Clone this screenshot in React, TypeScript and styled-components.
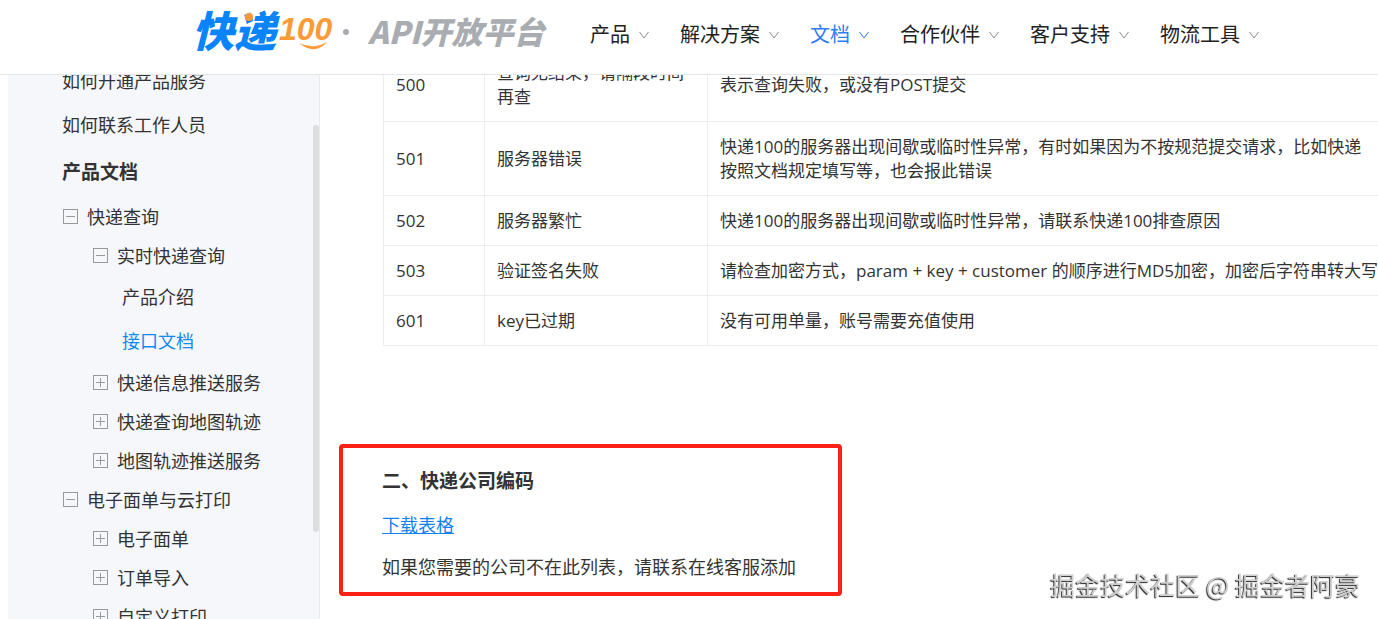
import React from "react";
import styled, { createGlobalStyle } from "styled-components";

const GlobalStyle = createGlobalStyle`
  *, *::before, *::after { box-sizing: border-box; }
  body {
    margin: 0;
    background: #fff;
    color: #333;
    font-family: "Open Sans", "Noto Sans CJK SC", sans-serif;
    font-size: 18px;
    line-height: 24px;
  }
  button { font: inherit; color: inherit; background: none; border: 0; padding: 0; cursor: pointer; }
  a { color: inherit; text-decoration: none; }
`;

const Page = styled.div`
  display: flex;
  flex-direction: column;
  height: 100vh;
  overflow: hidden;
`;

const Header = styled.header`
  display: flex;
  align-items: center;
  flex: none;
  height: 75px;
  padding: 0 20px 4px 185px;
  border-bottom: 1px solid #e4e6e8;
  background: #fff;
`;

const Brand = styled.a`
  display: block;
  flex: none;
  width: 370px;
  height: 66px;
  margin-right: 35px;
  svg { display: block; overflow: visible; }
`;

const TopNav = styled.nav`
  display: flex;
  gap: 31px;
`;

const NavButton = styled.button<{ $active?: boolean }>`
  display: flex;
  align-items: center;
  gap: 9px;
  font-size: 20px;
  line-height: 28px;
  white-space: nowrap;
  color: ${(p) => (p.$active ? "#2f7cf6" : "#222")};
  svg { color: ${(p) => (p.$active ? "#2f7cf6" : "#8a8a8a")}; }
`;

const Body = styled.div`
  display: flex;
  flex: 1;
  min-height: 0;
  padding-left: 8px;
`;

const Sidebar = styled.aside`
  position: relative;
  flex: none;
  width: 312px;
  overflow: hidden;
  background: #f5f7fb;
  border-right: 1px solid #e8eaee;
`;

const Thumb = styled.div`
  position: absolute;
  top: 50px;
  right: 0;
  width: 6px;
  height: 407px;
  border-radius: 3px;
  background: #dddee0;
`;

const Menu = styled.nav`
  display: flex;
  flex-direction: column;
  margin-top: -16px;
  padding-left: 54px;
`;

const MenuTitle = styled.h2`
  margin: 0;
  font-size: 19px;
  line-height: 50px;
  font-weight: 700;
`;

const MenuLink = styled.a<{ $leaf?: boolean; $active?: boolean }>`
  padding-left: ${(p) => (p.$leaf ? 60 : 0)}px;
  line-height: 44px;
  color: ${(p) => (p.$active ? "#1389f2" : "inherit")};
`;

const Branch = styled.button<{ $level: number }>`
  display: flex;
  align-items: center;
  gap: 9px;
  height: 39px;
  padding-left: ${(p) => (p.$level === 1 ? 1 : 31)}px;
  text-align: left;
  svg { flex: none; }
`;

const Article = styled.main`
  flex: 1;
  min-width: 0;
  overflow: hidden;
  padding-left: 63px;
`;

const Table = styled.table`
  width: calc(100% + 240px);
  margin-top: -28px;
  border-collapse: collapse;
  table-layout: fixed;
  font-size: 17px;
`;

const Cell = styled.td`
  padding: 13px 12px 12px;
  border: 1px solid #ebeef0;
  vertical-align: middle;
`;

const Description = styled(Cell)`
  white-space: pre;
`;

const Callout = styled.section`
  display: flex;
  flex-direction: column;
  align-items: flex-start;
  max-width: 503px;
  margin: 98px 0 0 -44px;
  padding: 21px 39px 12px;
  border: 4px solid #fb2018;
  border-radius: 4px;
`;

const CalloutTitle = styled.h3`
  margin: 0 0 20px;
  font-size: 19px;
  line-height: 24px;
  font-weight: 700;
`;

const Download = styled.a`
  margin-bottom: 18px;
  color: #1283ee;
  text-decoration: underline;
`;

const Note = styled.p`
  margin: 0 0 1px;
  white-space: nowrap;
`;

const Watermark = styled.div`
  position: fixed;
  right: 18px;
  bottom: 19px;
  font-family: "Noto Sans CJK SC", sans-serif;
  font-size: 25px;
  line-height: 32px;
  color: #cfcfcf;
  text-shadow: -1px 1px 1px #222;
  white-space: nowrap;
`;

const Logo = () => (
  <svg width="370" height="66" viewBox="-10 -7 370 66" role="img" aria-label="快递100 API开放平台">
    <g fontFamily="'Noto Sans CJK SC', sans-serif" fontWeight="900" fontStyle="italic">
      <text x="-3" y="38" fontSize="42" fill="#0a84fb">快递</text>
      <text x="173" y="35" fontSize="31" fill="#a9acb0">API开放平台</text>
    </g>
    <text x="84" y="31" fontFamily="'Liberation Sans', sans-serif" fontWeight="700" fontStyle="italic" fontSize="32" fill="#fd9a38">100</text>
    <path d="M104 34 Q118 41 132 33 Q120 47 104 34Z" fill="#fd9a38" />
    <circle cx="54" cy="8" r="4" fill="#fd9a38" />
    <circle cx="151" cy="23" r="3" fill="#a9acb0" />
  </svg>
);

const Chevron = () => (
  <svg width="10" height="8" viewBox="0 0 10 8" fill="none" stroke="currentColor" aria-hidden="true">
    <path d="M0.5 1 L5 7 L9.5 1" />
  </svg>
);

const Toggle = ({ open }: { open?: boolean }) => (
  <svg width="15" height="15" viewBox="0 0 15 15" fill="none" stroke="#999" aria-hidden="true">
    <rect x="0.5" y="0.5" width="14" height="14" />
    <path d={open ? "M3 7.5H12" : "M3 7.5H12M7.5 3V12"} />
  </svg>
);

const topItems = ["产品", "解决方案", "文档", "合作伙伴", "客户支持", "物流工具"];

const rows = [
  ["500", "查询无结果，请隔段时间再查", "表示查询失败，或没有POST提交"],
  ["501", "服务器错误", "快递100的服务器出现间歇或临时性异常，有时如果因为不按规范提交请求，比如快递\n按照文档规定填写等，也会报此错误"],
  ["502", "服务器繁忙", "快递100的服务器出现间歇或临时性异常，请联系快递100排查原因"],
  ["503", "验证签名失败", "请检查加密方式，param + key + customer 的顺序进行MD5加密，加密后字符串转大写"],
  ["601", "key已过期", "没有可用单量，账号需要充值使用"],
];

interface BranchItemProps {
  level: number;
  open?: boolean;
  children: React.ReactNode;
}

const BranchItem = ({ level, open, children }: BranchItemProps) => (
  <Branch type="button" $level={level} aria-expanded={!!open}>
    <Toggle open={open} />
    <span>{children}</span>
  </Branch>
);

export default function App() {
  return (
    <Page lang="zh-CN">
      <GlobalStyle />
      <Header>
        <Brand href="#"><Logo /></Brand>
        <TopNav>
          {topItems.map((item) => (
            <NavButton key={item} type="button" $active={item === "文档"}>
              {item}
              <Chevron />
            </NavButton>
          ))}
        </TopNav>
      </Header>
      <Body>
        <Sidebar>
          <Menu>
            <MenuLink href="#">如何开通产品服务</MenuLink>
            <MenuLink href="#">如何联系工作人员</MenuLink>
            <MenuTitle>产品文档</MenuTitle>
            <BranchItem level={1} open>快递查询</BranchItem>
            <BranchItem level={2} open>实时快递查询</BranchItem>
            <MenuLink href="#" $leaf>产品介绍</MenuLink>
            <MenuLink href="#" $leaf $active>接口文档</MenuLink>
            <BranchItem level={2}>快递信息推送服务</BranchItem>
            <BranchItem level={2}>快递查询地图轨迹</BranchItem>
            <BranchItem level={2}>地图轨迹推送服务</BranchItem>
            <BranchItem level={1} open>电子面单与云打印</BranchItem>
            <BranchItem level={2}>电子面单</BranchItem>
            <BranchItem level={2}>订单导入</BranchItem>
            <BranchItem level={2}>自定义打印</BranchItem>
          </Menu>
          <Thumb />
        </Sidebar>
        <Article>
          <Table>
            <colgroup>
              <col style={{ width: 101 }} />
              <col style={{ width: 223 }} />
              <col />
            </colgroup>
            <tbody>
              {rows.map(([code, message, description]) => (
                <tr key={code}>
                  <Cell>{code}</Cell>
                  <Cell>{message}</Cell>
                  <Description>{description}</Description>
                </tr>
              ))}
            </tbody>
          </Table>
          <Callout>
            <CalloutTitle>二、快递公司编码</CalloutTitle>
            <Download href="#">下载表格</Download>
            <Note>如果您需要的公司不在此列表，请联系在线客服添加</Note>
          </Callout>
        </Article>
      </Body>
      <Watermark>掘金技术社区 @ 掘金者阿豪</Watermark>
    </Page>
  );
}
